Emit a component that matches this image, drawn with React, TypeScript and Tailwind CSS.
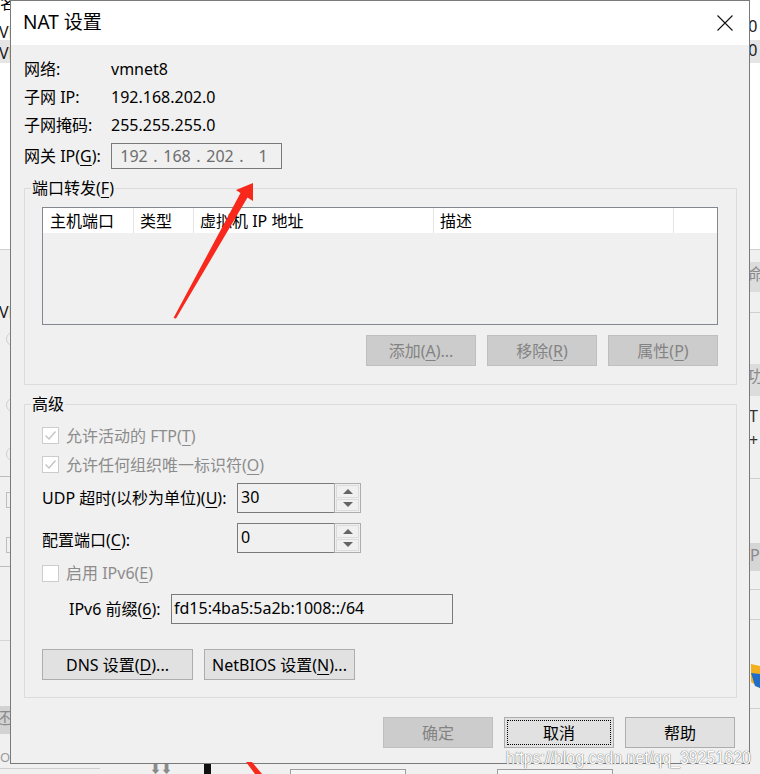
import React from 'react';

const U = ({ children }: { children: React.ReactNode }) => (
  <span className="underline decoration-1 underline-offset-[3px]">{children}</span>
);

function Btn({
  children,
  disabled,
  focused,
}: {
  children: React.ReactNode;
  disabled?: boolean;
  focused?: boolean;
}) {
  let cls = 'h-[31px] w-[110px] border text-[16px] leading-none ';
  if (disabled) cls += 'border-[#bfbfbf] bg-[#cccccc] text-[#838383]';
  else cls += 'border-[#adadad] bg-[#e1e1e1] text-black';
  if (focused) cls += ' outline-1 outline-dotted outline-black outline-offset-[-4px]';
  return <button className={cls}>{children}</button>;
}

function CheckRow({ checked, children, className }: { checked?: boolean; children: React.ReactNode; className: string }) {
  return (
    <div className={'flex items-center gap-[7px] text-[#8c8c8c] ' + className}>
      <span className="flex h-[17px] w-[17px] items-center justify-center border border-[#cccccc] bg-white">
        {checked && (
          <svg width="13" height="13" viewBox="0 0 13 13">
            <path d="M1.5 6.5 L5 10 L11.5 2.5" fill="none" stroke="#c4c4c4" strokeWidth="1.4" />
          </svg>
        )}
      </span>
      <span>{children}</span>
    </div>
  );
}

const Tri = ({ up }: { up?: boolean }) => (
  <svg width="10" height="5" viewBox="0 0 10 5">
    <path d={up ? 'M0 5 L5 0 L10 5Z' : 'M0 0 L10 0 L5 5Z'} fill="#646464" />
  </svg>
);

function Spin({ value }: { value: string }) {
  return (
    <div className="flex h-[30px] w-[124px]">
      <div className="flex flex-1 items-center border border-r-0 border-[#7a7a7a] bg-[#f0f0f0] pl-[3px] pb-[2px]">{value}</div>
      <div className="flex w-[27px] flex-col gap-[1px] border border-[#adadad] bg-[#f0f0f0] p-[1px]">
        <div className="flex flex-1 items-center justify-center border border-[#dcdcdc]">
          <Tri up />
        </div>
        <div className="flex flex-1 items-center justify-center border border-[#dcdcdc]">
          <Tri />
        </div>
      </div>
    </div>
  );
}

function Backdrop() {
  return (
    <div className="absolute inset-0 bg-[#f0f0f0] text-[16px]">
      {/* left strip */}
      <div className="absolute left-0 top-0 h-[250px] w-[12px] overflow-hidden border-b border-[#d0d0d0] bg-white">
        <div className="absolute left-0 top-[-9px] text-black">名</div>
        <div className="absolute left-[-1px] top-[20px] text-[#1a1a1a]">VM</div>
        <div className="absolute left-0 top-[40px] h-[23px] w-[12px] bg-[#e5e5e5]" />
        <div className="absolute left-[-1px] top-[41px] text-[#1a1a1a]">VM</div>
      </div>
      <div className="absolute left-[-1px] top-[300px] w-[11px] overflow-hidden text-[#1a1a1a]">VM</div>
      <div className="absolute left-[6px] top-[332px] h-[14px] w-[14px] rounded-full border border-[#cfcfcf]" />
      <div className="absolute left-[6px] top-[398px] h-[14px] w-[14px] rounded-full border border-[#cfcfcf]" />
      <div className="absolute left-[6px] top-[447px] h-[14px] w-[14px] rounded-full border border-[#cfcfcf]" />
      <div className="absolute left-0 top-[476px] h-px w-[10px] bg-[#bdbdbd]" />
      <div className="absolute left-[6px] top-[492px] h-[16px] w-[6px] border border-[#bdbdbd]" />
      <div className="absolute left-[6px] top-[537px] h-[16px] w-[6px] border border-[#bdbdbd]" />
      <div className="absolute left-0 top-[566px] h-px w-[10px] bg-[#bdbdbd]" />
      <div className="absolute left-0 top-[640px] h-px w-[10px] bg-[#d6d6d6]" />
      <div className="absolute left-0 top-[706px] h-[28px] w-[10px] overflow-hidden bg-[#d2d2d2] text-[#8a8a8a]">
        <span className="ml-[-5px]">还</span>
      </div>
      <div className="absolute left-0 top-[748px] w-[10px] overflow-hidden text-[13px] text-[#9a9a9a]">OH</div>

      {/* right strip */}
      <div className="absolute right-0 top-0 h-[250px] w-[11px] overflow-hidden border-b border-[#d0d0d0] bg-white">
        <div className="absolute left-[-5px] top-[14px] text-[#1a1a1a]">.0</div>
        <div className="absolute left-0 top-[40px] h-[23px] w-[11px] bg-[#e5e5e5]" />
        <div className="absolute left-[-5px] top-[38px] text-[#1a1a1a]">.0</div>
      </div>
      <div className="absolute right-0 top-[262px] h-[30px] w-[11px] overflow-hidden bg-[#dcdcdc] text-[#8a8a8a]">
        <span className="ml-[-1px]">命</span>
      </div>
      <div className="absolute right-0 top-[312px] h-px w-[11px] bg-[#cfcfcf]" />
      <div className="absolute right-0 top-[364px] h-[32px] w-[11px] overflow-hidden bg-[#dcdcdc] text-[#8a8a8a]">
        <span className="ml-[-2px]">功</span>
      </div>
      <div className="absolute right-0 top-[404px] w-[11px] overflow-hidden text-[#333]">T +</div>
      <div className="absolute right-0 top-[478px] h-px w-[11px] bg-[#cfcfcf]" />
      <div className="absolute right-0 top-[543px] h-[28px] w-[11px] overflow-hidden bg-[#d6d6d6] text-[#8a8a8a]">
        <span className="ml-[1px]">P</span>
      </div>
      <div className="absolute right-0 top-[589px] h-px w-[11px] bg-[#cfcfcf]" />
      <div className="absolute right-0 top-[619px] h-px w-[11px] bg-[#cfcfcf]" />
      <svg className="absolute right-0 top-[662px]" width="10" height="28" viewBox="0 0 10 28">
        <path d="M1 2 L10 4 L10 26 L1 20Z" fill="#f2b01e" />
        <path d="M1 11 L10 12 L10 26 L5 24Z" fill="#1f6fc9" />
      </svg>
      <div className="absolute right-0 top-[708px] h-px w-[11px] bg-[#cfcfcf]" />

      {/* bottom strip */}
      <div className="absolute left-[0px] top-[768px] h-px w-[100px] bg-[#cfcfcf]" />
      <div className="absolute left-[150px] top-[763px] text-[11px] leading-none text-[#8a8a8a]">⬇⬇</div>
      <div className="absolute left-[204px] top-[763px] h-[11px] w-[7px] bg-[#111]" />
      <div className="absolute left-[290px] top-[769px] h-[10px] w-[116px] border border-[#9d9d9d] bg-[#f5f5f5]" />
      <div className="absolute left-[497px] top-[769px] h-[10px] w-[116px] border border-[#9d9d9d] bg-[#f5f5f5]" />
    </div>
  );
}

export default function App() {
  return (
    <div className="relative h-[774px] w-[760px] overflow-hidden text-[16px] text-black [font-family:'Noto_Sans','Noto_Sans_CJK_SC',sans-serif]">
      <Backdrop />

      <div className="relative ml-[10px] flex h-[764px] w-[740px] flex-col border border-[#7a7a7a] bg-[#f0f0f0]">
        {/* title bar */}
        <div className="flex h-[44px] items-center justify-between bg-white pl-[12px] pr-[16px]">
          <span className="pb-[2px] text-[19px]">NAT 设置</span>
          <svg width="16" height="16" viewBox="0 0 16 16">
            <path d="M0.5 0.5 L15.5 15.5 M15.5 0.5 L0.5 15.5" stroke="#111" strokeWidth="1.1" />
          </svg>
        </div>

        <div className="flex flex-col pl-[13px] pt-[10px]">
          <div className="flex h-[28px] items-center">
            <span className="w-[87px]">网络:</span>
            <span>vmnet8</span>
          </div>
          <div className="flex h-[28px] items-center">
            <span className="w-[87px]">子网 IP:</span>
            <span>192.168.202.0</span>
          </div>
          <div className="flex h-[28px] items-center">
            <span className="w-[87px]">子网掩码:</span>
            <span>255.255.255.0</span>
          </div>
          <div className="mt-[4px] flex h-[26px] items-center">
            <span className="w-[87px]">
              网关 IP(<U>G</U>):
            </span>
            <div className="flex h-[26px] w-[171px] items-center border border-[#7a7a7a] pb-[1px] pl-[4px] text-[#6d6d6d]">
              <span className="w-[36px] text-center">192</span>
              <span className="w-[7px] text-center">.</span>
              <span className="w-[36px] text-center">168</span>
              <span className="w-[7px] text-center">.</span>
              <span className="w-[36px] text-center">202</span>
              <span className="w-[7px] text-center">.</span>
              <span className="w-[36px] text-center">1</span>
            </div>
          </div>

          {/* port forwarding */}
          <fieldset className="mt-[9px] w-[713px] border border-[#dcdcdc] p-0">
            <legend className="ml-[6px] px-[1px] leading-[20px]">
              端口转发(<U>F</U>)
            </legend>
            <div className="px-[17px] pb-[18px]">
              <div className="mt-[9px] h-[118px] w-[676px] border border-[#828790] bg-[#f0f0f0]">
                <div className="flex h-[25px] items-center bg-white">
                  <div className="h-full w-[91px] border-r border-[#e5e5e5] pl-[7px] leading-[26px]">主机端口</div>
                  <div className="h-full w-[60px] border-r border-[#e5e5e5] pl-[6px] leading-[26px]">类型</div>
                  <div className="h-full w-[240px] border-r border-[#e5e5e5] pl-[6px] leading-[26px]">虚拟机 IP 地址</div>
                  <div className="h-full w-[240px] border-r border-[#e5e5e5] pl-[6px] leading-[26px]">描述</div>
                  <div className="h-full flex-1" />
                </div>
              </div>
              <div className="mt-[10px] flex w-[676px] justify-end gap-[11px]">
                <Btn disabled>
                  添加(<U>A</U>)...
                </Btn>
                <Btn disabled>
                  移除(<U>R</U>)
                </Btn>
                <Btn disabled>
                  属性(<U>P</U>)
                </Btn>
              </div>
            </div>
          </fieldset>

          {/* advanced */}
          <fieldset className="mt-[9px] w-[713px] border border-[#dcdcdc] p-0">
            <legend className="ml-[6px] px-[1px] leading-[20px]">高级</legend>
            <div className="flex flex-col pb-[17px] pl-[17px]">
              <CheckRow checked className="mt-[7px] h-[29px]">
                允许活动的 FTP(<U>T</U>)
              </CheckRow>
              <CheckRow checked className="h-[29px]">
                允许任何组织唯一标识符(<U>O</U>)
              </CheckRow>
              <div className="mt-[4px] flex h-[30px] items-center">
                <span className="w-[195px]">
                  UDP 超时(以秒为单位)(<U>U</U>):
                </span>
                <Spin value="30" />
              </div>
              <div className="mt-[10px] flex h-[30px] items-center">
                <span className="w-[195px] pt-[4px]">
                  配置端口(<U>C</U>):
                </span>
                <Spin value="0" />
              </div>
              <CheckRow className="mt-[5px] h-[30px]">
                启用 IPv6(<U>E</U>)
              </CheckRow>
              <div className="mt-[6px] flex h-[30px] items-center">
                <span className="ml-[27px] w-[102px]">
                  IPv6 前缀(<U>6</U>):
                </span>
                <div className="flex h-[30px] w-[282px] items-center border border-[#7a7a7a] pb-[3px] pl-[2px]">
                  fd15:4ba5:5a2b:1008::/64
                </div>
              </div>
              <div className="mt-[25px] flex gap-[11px]">
                <button className="h-[31px] w-[151px] border border-[#adadad] bg-[#e1e1e1] leading-none">
                  DNS 设置(<U>D</U>)...
                </button>
                <button className="h-[31px] w-[151px] border border-[#adadad] bg-[#e1e1e1] leading-none">
                  NetBIOS 设置(<U>N</U>)...
                </button>
              </div>
            </div>
          </fieldset>
        </div>

        <div className="mt-[19px] flex justify-end gap-[11px] pr-[14px]">
          <Btn disabled>确定</Btn>
          <Btn focused>取消</Btn>
          <Btn>帮助</Btn>
        </div>
      </div>

      {/* red annotation arrow */}
      <svg className="pointer-events-none absolute left-0 top-0" width="760" height="774" viewBox="0 0 760 774">
        <path d="M253 183 L236 190 L240.5 193 L173.5 318 L176 318.5 L247.5 197.5 L253 201 Z" fill="#f8281c" />
        <path d="M246 762 L252 762 L262 774 L255 774 Z" fill="#f8281c" />
      </svg>

      {/* watermark */}
      <div className="pointer-events-none absolute left-[506px] top-[744px] origin-left scale-x-[0.84] whitespace-nowrap text-[19px] text-white [font-family:'Liberation_Sans',sans-serif] [text-shadow:0_0_1px_#707070,0_0_1px_#707070]">
        https://blog.csdn.net/qq_39251620
      </div>
    </div>
  );
}
